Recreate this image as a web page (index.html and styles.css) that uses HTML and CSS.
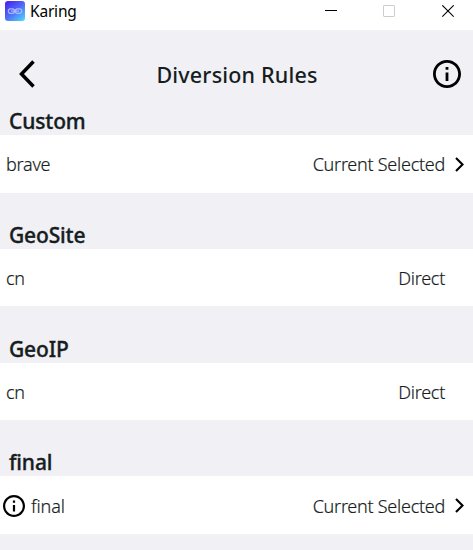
FILE: index.html
```html
<!DOCTYPE html>
<html lang="en">
<head>
<meta charset="utf-8">
<title>Karing</title>
<link rel="stylesheet" href="styles.css">
</head>
<body>
<div class="titlebar">
  <svg class="logo" width="20" height="20" viewBox="0 0 20 20">
    <defs><linearGradient id="g" x1="0.1" y1="0" x2="0.9" y2="1"><stop offset="0" stop-color="#4b20f2"/><stop offset="0.5" stop-color="#4f6bf6"/><stop offset="1" stop-color="#4ed4fa"/></linearGradient></defs>
    <rect width="20" height="20" rx="3" fill="url(#g)"/>
    <g fill="none" stroke="#a9b8ff" stroke-width="1.2"><rect x="3.3" y="7.8" width="6.4" height="4.6" rx="2.3"/><rect x="10.3" y="7.8" width="6.4" height="4.6" rx="2.3"/><path d="M6 10.1h8"/></g>
  </svg>
  <span class="app">Karing</span>
  <svg class="controls" width="129" height="13" viewBox="0 0 129 13" fill="none">
    <path d="M0 5.5h12" stroke="#000"/>
    <rect x="58.5" y="0.5" width="11" height="11" rx=".6" stroke="#ccc"/>
    <path d="M117.3.3l11.4 11.4M128.7.3l-11.4 11.4" stroke="#000" stroke-width="1.1"/>
  </svg>
</div>
<header class="header">
  <svg class="back" width="16" height="28" viewBox="0 0 16 28"><path d="M14.500 1.500L2.500 14l12 12.500" fill="none" stroke="#000" stroke-width="3.500"/></svg>
  <h1>Diversion Rules</h1>
  <svg width="28" height="28" viewBox="2 2 20 20"><path d="M11 7h2v2h-2zm0 4h2v6h-2zm1-9C6.480 2 2 6.480 2 12s4.480 10 10 10 10-4.480 10-10S17.520 2 12 2zm0 18c-4.410 0-8-3.590-8-8s3.590-8 8-8 8 3.590 8 8-3.590 8-8 8z"/></svg>
</header>
<main>
  <section><h2>Custom</h2>
    <div class="row"><span class="name">brave</span><span class="value">Current Selected</span><svg class="chev" width="9" height="15" viewBox="0 0 9 15"><path d="M1 1l6.500 6.500L1 14" fill="none" stroke="#000" stroke-width="2.100"/></svg></div></section>
  <section><h2>GeoSite</h2>
    <div class="row"><span class="name">cn</span><span class="value">Direct</span><span class="chev"></span></div></section>
  <section><h2>GeoIP</h2>
    <div class="row"><span class="name">cn</span><span class="value">Direct</span><span class="chev"></span></div></section>
  <section><h2>final</h2>
    <div class="row final"><svg class="small-info" width="22" height="22" viewBox="2 2 20 20"><path d="M11 7h2v2h-2zm0 4h2v6h-2zm1-9C6.480 2 2 6.480 2 12s4.480 10 10 10 10-4.480 10-10S17.520 2 12 2zm0 18c-4.410 0-8-3.590-8-8s3.590-8 8-8 8 3.590 8 8-3.590 8-8 8z"/></svg><span class="name">final</span><span class="value">Current Selected</span><svg class="chev" width="9" height="15" viewBox="0 0 9 15"><path d="M1 1l6.500 6.500L1 14" fill="none" stroke="#000" stroke-width="2.100"/></svg></div></section>
</main>
</body>
</html>
```
FILE: styles.css
```css
* { box-sizing: border-box; }
body { margin: 0; height: 550px; overflow: hidden; background: #f0f0f5; color: #171d1e; font-family: "Noto Sans", "Open Sans", sans-serif; }
svg { display: block; flex: none; }
.titlebar { height: 30px; background: #fff; display: flex; padding: 1px 19px 0 5px; color: #000; }
.app { margin-left: 5px; font-size: 15.500px; line-height: 21px; letter-spacing: -.2px; }
.controls { margin: 4px 0 0 auto; }
.header { height: 77px; display: flex; padding: 30px 12px 0 19px; }
.header h1 { flex: 1; margin: 0; padding-left: 6px; text-align: center; font-size: 21.500px; font-weight: 500; line-height: 30px; letter-spacing: .18px; white-space: nowrap; }
section { height: 113.800px; }
h2 { height: 28px; margin: 0; padding-left: 9px; font-size: 21px; line-height: 29px; font-weight: 500; letter-spacing: -.15px; -webkit-text-stroke: .35px; }
.row { height: 57.500px; background: #fff; display: flex; align-items: center; padding: 1px 9px 0 6px; font-size: 18px; font-weight: 300; letter-spacing: -.26px; white-space: nowrap; -webkit-text-stroke: .18px; }
.row.final { padding-left: 3px; }
.small-info { margin-right: 6px; }
.row.final .name { letter-spacing: -.1px; }
.value { margin-left: auto; }
.chev { width: 9px; margin-left: 10px; }
```
